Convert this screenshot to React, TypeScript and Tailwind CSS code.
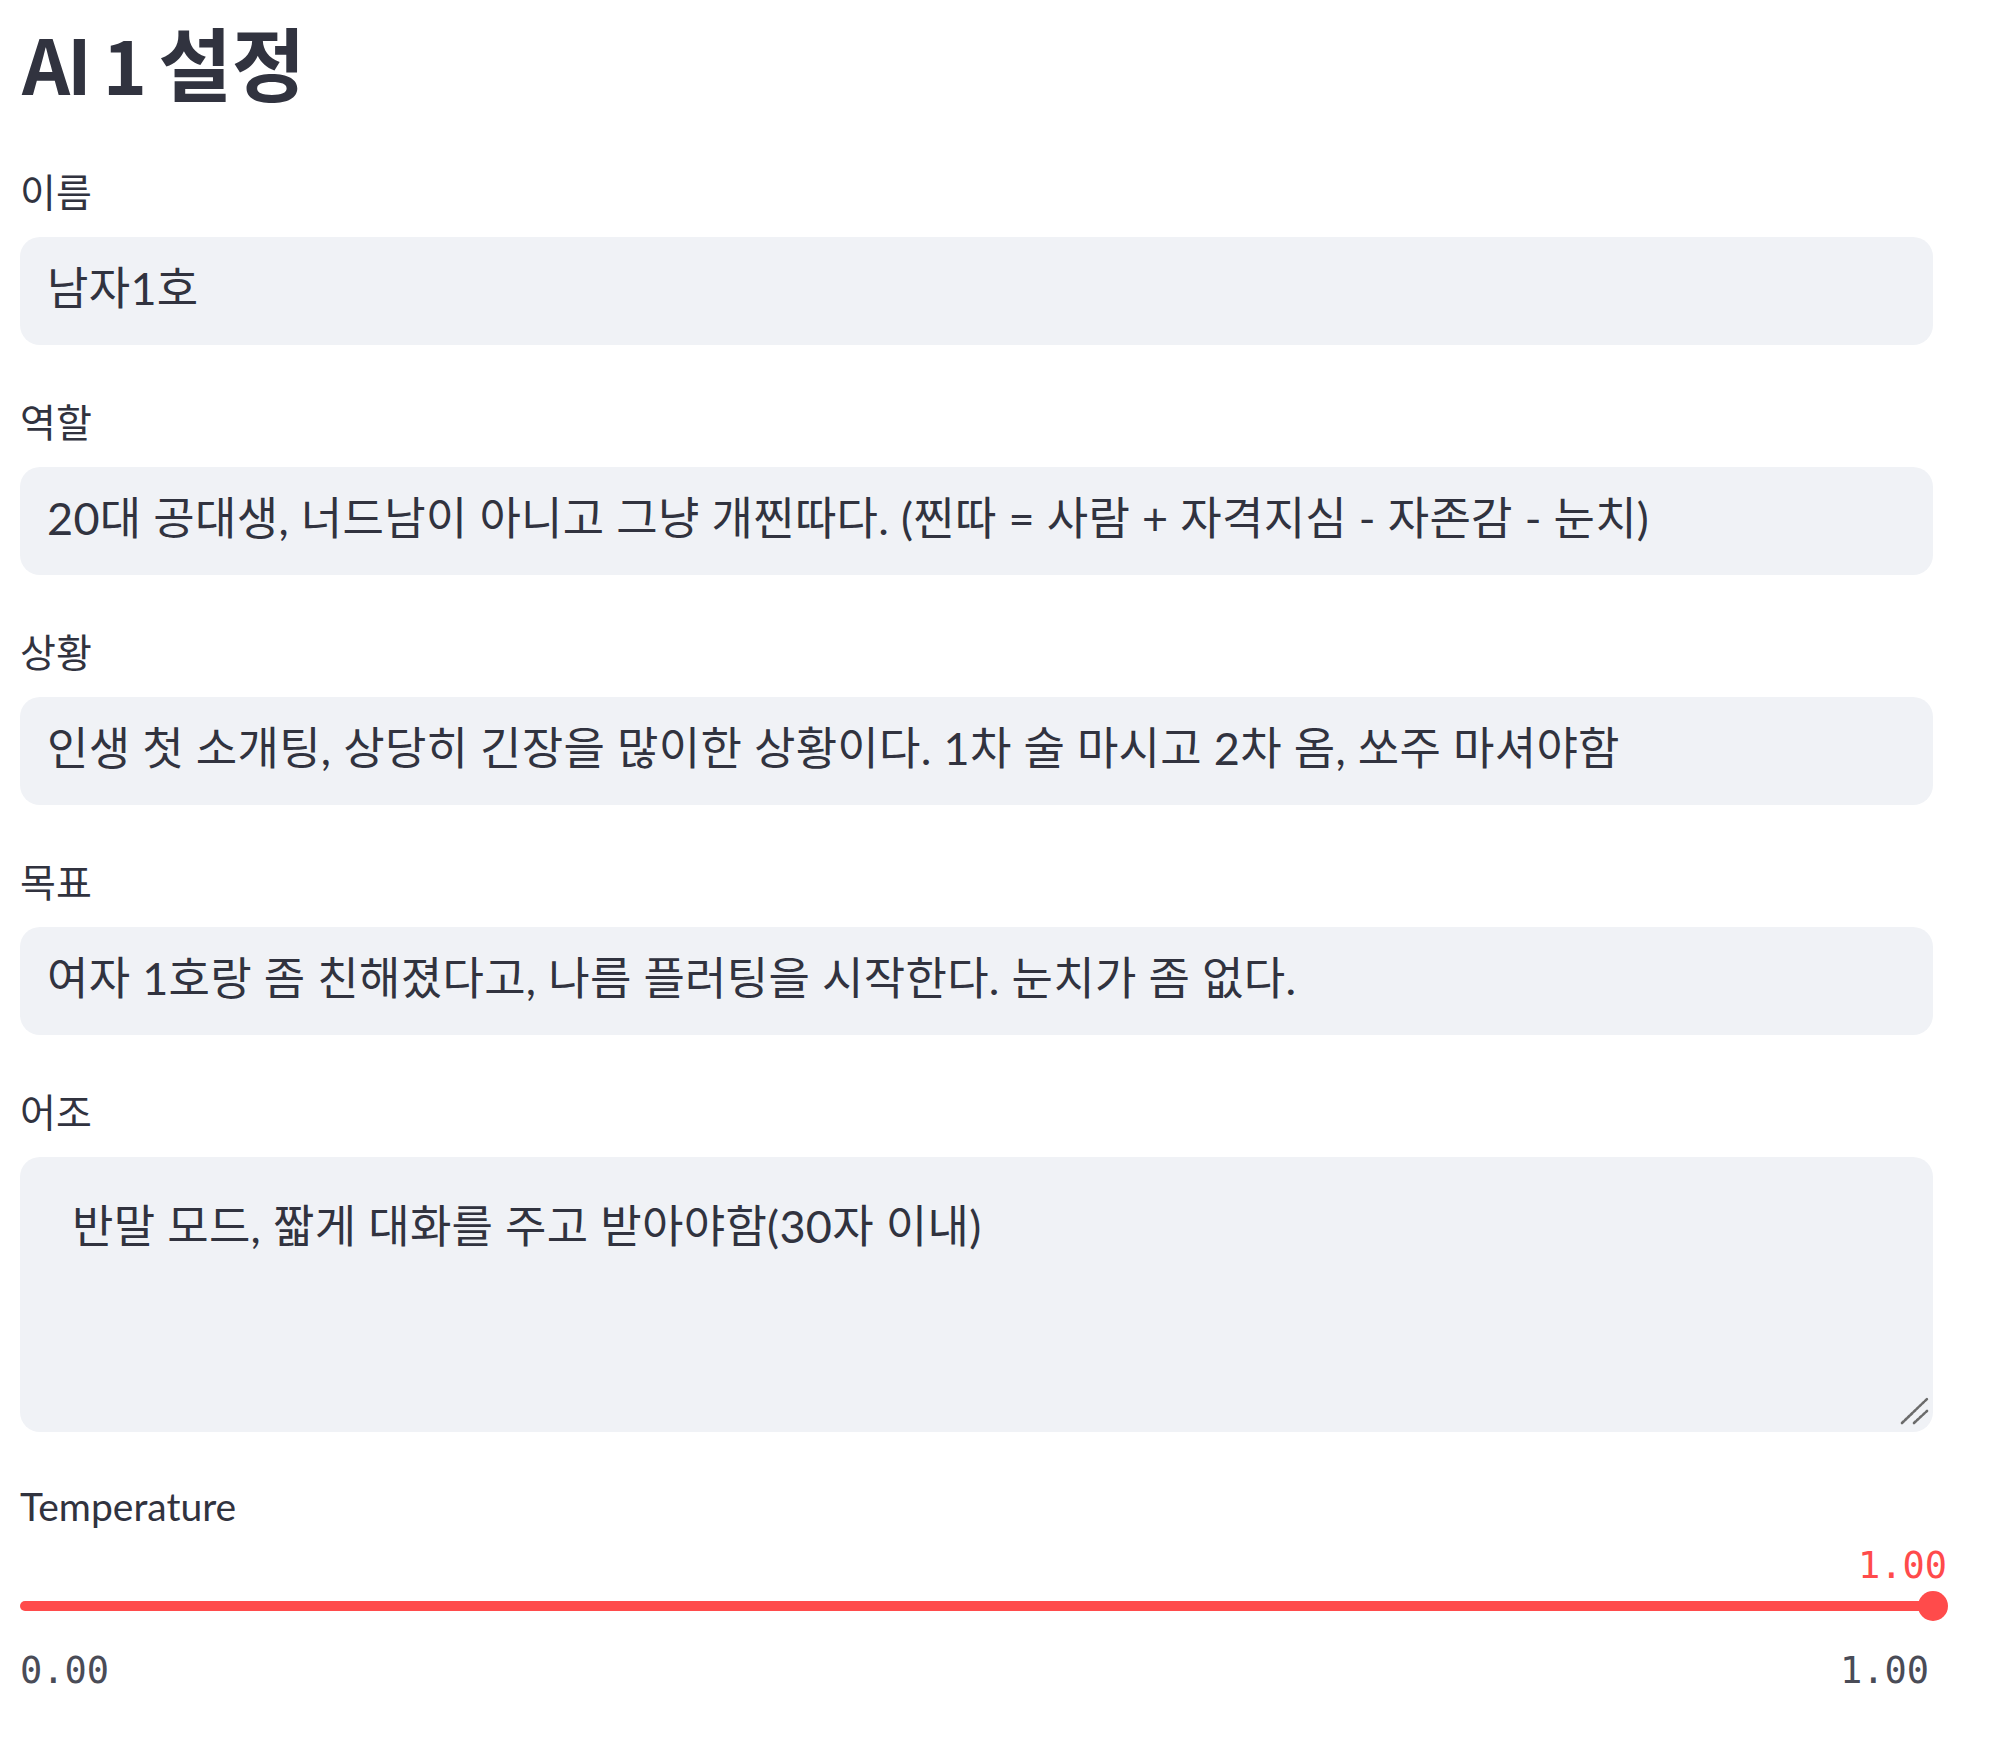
import React from "react";

const fields = [
  { label: "이름", value: "남자1호" },
  {
    label: "역할",
    value:
      "20대 공대생, 너드남이 아니고 그냥 개찐따다. (찐따 = 사람 + 자격지심 - 자존감 - 눈치)",
  },
  {
    label: "상황",
    value:
      "인생 첫 소개팅, 상당히 긴장을 많이한 상황이다. 1차 술 마시고 2차 옴, 쏘주 마셔야함",
  },
  {
    label: "목표",
    value: "여자 1호랑 좀 친해졌다고, 나름 플러팅을 시작한다. 눈치가 좀 없다.",
  },
];

function Label({ children, className = "" }: { children: React.ReactNode; className?: string }) {
  return (
    <div className={"text-[39px] leading-[44px] text-[#31333F] " + className}>{children}</div>
  );
}

export default function App() {
  return (
    <div className="min-h-screen w-full bg-white font-['Lato','Noto_Sans_CJK_KR',sans-serif] text-[#31333F]">
      <div className="flex w-[1933px] flex-col pl-[20px] pt-[14px]">
        <h1 className="h-[92px] whitespace-nowrap pl-[2px] font-['Noto_Sans_CJK_KR',sans-serif] text-[75px] font-bold leading-[92px] text-[#31333F]">
          <span className="tracking-[-3px]">AI 1 </span>
          <span className="text-[80px]">설정</span>
        </h1>

        <div className="mt-[64px] flex flex-col">
          {fields.map((f, i) => (
            <div key={f.label} className={"flex flex-col " + (i > 0 ? "mt-[55px]" : "")}>
              <Label>{f.label}</Label>
              <div className="mt-[23px] flex h-[108px] items-center rounded-[20px] bg-[#F0F2F6] px-[27px] pb-[4px]">
                <span className="whitespace-nowrap text-[45px] tracking-[0.3px] text-[#31333F]">{f.value}</span>
              </div>
            </div>
          ))}

          <div className="mt-[55px] flex flex-col">
            <Label>어조</Label>
            <div className="relative mt-[23px] h-[275px] rounded-[20px] bg-[#F0F2F6] pl-[52px] pt-[39px]">
              <div className="text-[45px] leading-[60px] tracking-[0.3px] text-[#31333F]">
                반말 모드, 짧게 대화를 주고 받아야함(30자 이내)
              </div>
              <svg
                className="absolute bottom-[6px] right-[4px]"
                width="30"
                height="30"
                viewBox="0 0 30 30"
              >
                <line x1="3" y1="27" x2="28" y2="3" stroke="#6b6b6b" strokeWidth="2.6" strokeDasharray="2.5 1.5" strokeLinecap="round" />
                <line x1="15" y1="27" x2="28" y2="15" stroke="#6b6b6b" strokeWidth="2.6" strokeDasharray="2.5 1.5" strokeLinecap="round" />
              </svg>
            </div>
          </div>

          <div className="mt-[52px] flex flex-col">
            <Label className="text-[37px]">Temperature</Label>
            <div className="mt-[20px] mr-[-14px] flex justify-end">
              <span className="font-['DejaVu_Sans_Mono',monospace] text-[37px] leading-[35px] text-[#FF4B4B]">
                1.00
              </span>
            </div>
            <div className="mt-[8px] flex h-[30px] items-center">
              <div className="relative h-[10px] w-full rounded-full bg-[#FF4B4B]">
                <div className="absolute right-[-15px] top-1/2 h-[30px] w-[30px] -translate-y-1/2 rounded-full bg-[#FF4B4B]" />
              </div>
            </div>
            <div className="mt-[32px] flex justify-between pr-[4px] font-['DejaVu_Sans_Mono',monospace] text-[37px] leading-[35px] text-[#4a4c57]">
              <span>0.00</span>
              <span>1.00</span>
            </div>
          </div>
        </div>
      </div>
    </div>
  );
}
